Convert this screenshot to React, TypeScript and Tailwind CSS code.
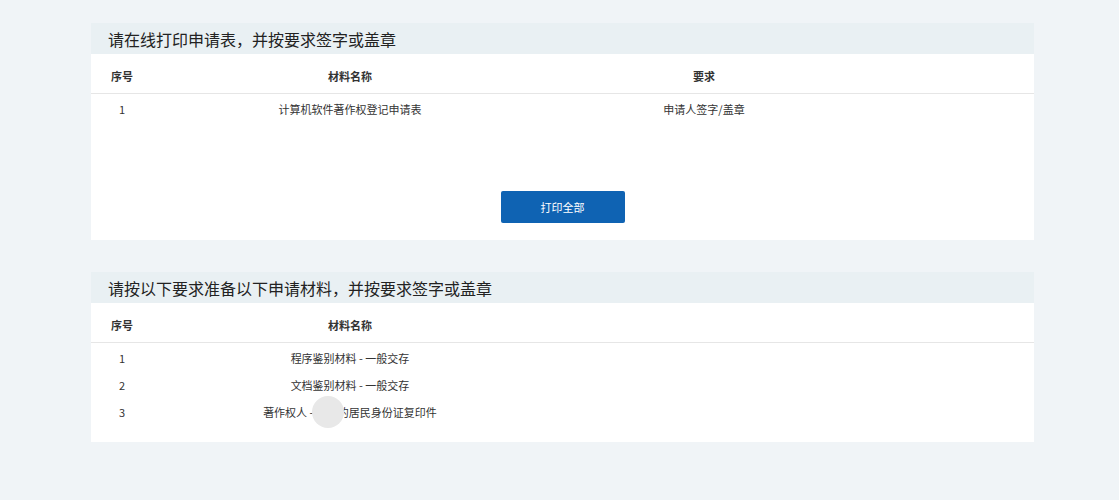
import React from 'react';

const font = { fontFamily: '"Noto Sans CJK SC", "Liberation Sans", sans-serif' };

const Section = ({ title, children }: { title: string; children: React.ReactNode }) => (
  <div className="w-[943px] ml-[91px] bg-white">
    <div className="h-[31px] bg-[#e9f0f3] px-[17px] flex items-center text-[16px] text-[#222]">{title}</div>
    {children}
  </div>
);

export default function App() {
  return (
    <div className="w-[1119px] h-[500px] bg-[#f0f4f7] pt-[23px]" style={font}>
      <Section title="请在线打印申请表，并按要求签字或盖章">
        <div className="flex h-[40px] pt-[6px] items-center border-b border-[#e6e6e6] text-[11px] font-bold text-[#333]">
          <div className="w-[62px] text-center">序号</div>
          <div className="w-[394px] text-center">材料名称</div>
          <div className="w-[314px] text-center">要求</div>
        </div>
        <div className="flex h-[28px] pt-[2px] items-center text-[11px] text-[#333]">
          <div className="w-[62px] text-center">1</div>
          <div className="w-[394px] text-center">计算机软件著作权登记申请表</div>
          <div className="w-[314px] text-center">申请人签字/盖章</div>
        </div>
        <div className="flex justify-center pt-[69px] pb-[17px]">
          <button className="w-[124px] h-[32px] bg-[#0f63b3] text-white text-[11px] rounded-[2px]">打印全部</button>
        </div>
      </Section>
      <div className="h-[32px]" />
      <Section title="请按以下要求准备以下申请材料，并按要求签字或盖章">
        <div className="flex h-[40px] pt-[6px] items-center border-b border-[#e6e6e6] text-[11px] font-bold text-[#333]">
          <div className="w-[62px] text-center">序号</div>
          <div className="w-[394px] text-center">材料名称</div>
        </div>
        <div className="pt-[1px] pb-[17px] text-[11px] text-[#333]">
          {['程序鉴别材料 - 一般交存', '文档鉴别材料 - 一般交存', '著作权人 - 张三的居民身份证复印件'].map((t, i) => (
            <div key={i} className="flex h-[27px] pt-[2px] items-center">
              <div className="w-[62px] text-center">{i + 1}</div>
              <div className="w-[394px] text-center relative">
                {t}
                {i === 2 && <span className="absolute left-[159px] top-[-8px] w-[32px] h-[32px] rounded-full bg-[#e8e8e8]" />}
              </div>
            </div>
          ))}
        </div>
      </Section>
    </div>
  );
}
